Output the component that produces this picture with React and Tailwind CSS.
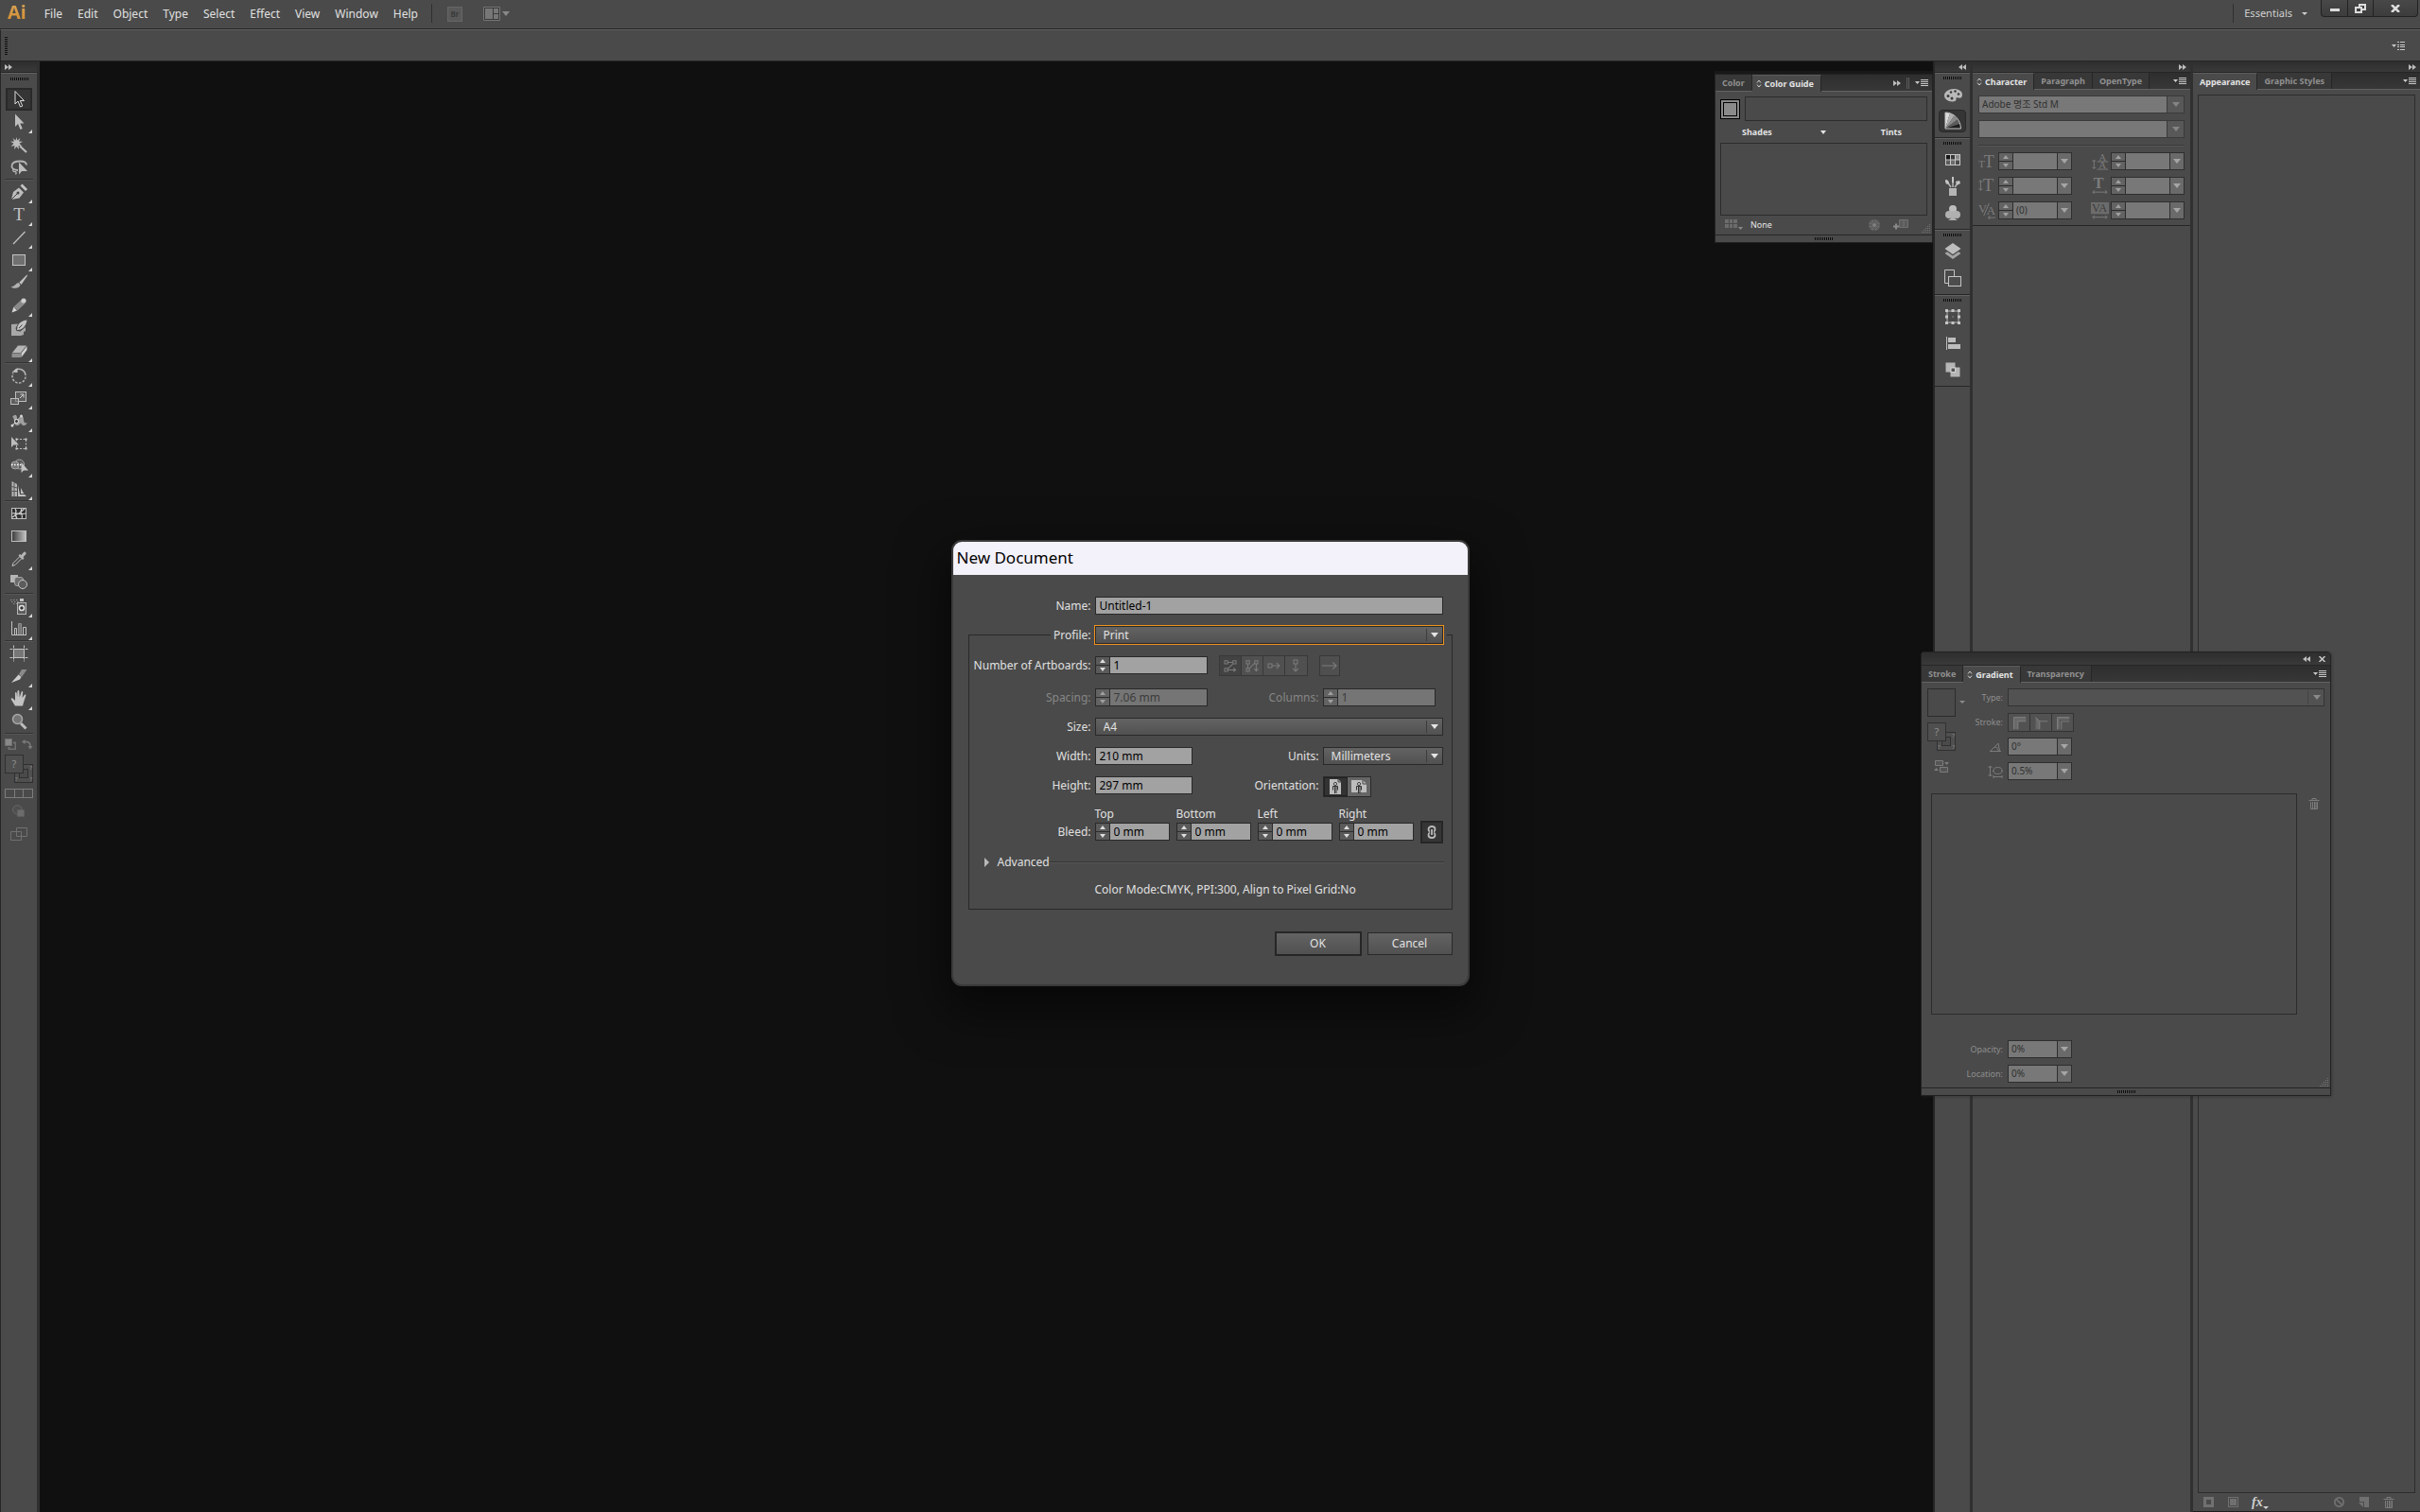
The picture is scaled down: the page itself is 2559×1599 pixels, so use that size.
import React, { useState } from 'react';
import clsx from 'clsx';

const MENUS = ['File', 'Edit', 'Object', 'Type', 'Select', 'Effect', 'View', 'Window', 'Help'];

const ARROW = 'M6 1.500v13.500l3-3 2.500 6 2.300-1-2.500-5.500H15.500z';

/* ---------- Tool icons, all on a 20x20 grid ---------- */

const TOOL_GROUPS = [
  [
    { id: 'Selection', active: true, icon: <path d={ARROW} fill="#2c2c2c" stroke="#dcdcdc" /> },
    { id: 'Direct Selection', more: true, icon: <path d={ARROW} fill="#bdbdbd" /> },
    {
      id: 'Magic Wand',
      icon: (
        <>
          <path d="M7.500 2l.8 3.500L11.500 3 10 6.500l4 .3-3.500 2 3 3-4-.8.5 4-2.500-3-2.500 3 .5-4-4 .8 3-3L1 6.800l4-.3L3.500 3l3 2.500z" fill="#bdbdbd" />
          <path d="M11 11.500L18 18" stroke="#bdbdbd" strokeWidth="2" />
        </>
      ),
    },
    {
      id: 'Lasso',
      icon: (
        <>
          <path d="M9 13C4 13 2 10.500 2.500 8 3 5 7 3.500 11 3.500s7 1.500 7 4" fill="none" stroke="#b5b5b5" strokeWidth="1.800" />
          <path d="M5 11.500c-2 1-1.500 3 .5 3s2 1.500 1 3" fill="none" stroke="#b5b5b5" strokeWidth="1.300" />
          <path d="M10 4.500v13l3-3.500h6z" fill="#bdbdbd" />
        </>
      ),
    },
  ],
  [
    {
      id: 'Pen',
      more: true,
      icon: (
        <>
          <path d="M2 18l2-8 6-4.500 5 5-4.500 6z" fill="#bdbdbd" />
          <path d="M2 18l6.500-6.500" stroke="#444" />
          <circle cx="9" cy="11" r="1.500" fill="#444" />
          <path d="M11.500 3.500l2-2 5.500 5.500-2 2z" fill="#c4c4c4" />
        </>
      ),
    },
    {
      id: 'Type',
      more: true,
      icon: <text x="10" y="16" textAnchor="middle" fontSize="19" fill="#c2c2c2" fontFamily="Liberation Serif, serif">T</text>,
    },
    { id: 'Line Segment', more: true, icon: <path d="M4 17L16.500 4" stroke="#c2c2c2" strokeWidth="1.300" /> },
    { id: 'Rectangle', more: true, icon: <rect x="3.500" y="4.500" width="13" height="11" fill="#707070" stroke="#c2c2c2" /> },
    {
      id: 'Paintbrush',
      icon: (
        <>
          <path d="M18.500 1.500l-8 8 2 2.500 6.500-9.500z" fill="#c2c2c2" />
          <path d="M10 10c-3 0-3 3-8.500 4.500 3 2 8.500 2 10-2z" fill="#b0b0b0" />
        </>
      ),
    },
    {
      id: 'Pencil',
      more: true,
      icon: (
        <>
          <path d="M2.500 17.500l2-6 3.500 4z" fill="#d5d5d5" />
          <path d="M4.500 11.500l8-7.500 4 4-8 7.500z" fill="#8a8a8a" />
          <circle cx="15" cy="5" r="2.600" fill="#cfcfcf" />
        </>
      ),
    },
    {
      id: 'Blob Brush',
      icon: (
        <>
          <path d="M2 6l7-.5L6.500 10l1 3 4 .5L17 9v4l-2 1v3l-3 1H2z" fill="#a8a8a8" />
          <path d="M18.500 1.500c-4 0-9 3-10 7l-.5 3.500 3.500-.5c4-1.500 6-5 7-10z" fill="#c2c2c2" />
          <path d="M10 10l3.500-3.500" stroke="#444" />
        </>
      ),
    },
    {
      id: 'Eraser',
      more: true,
      icon: (
        <>
          <path d="M3 12l6-7.500h9L12 12z" fill="#b5b5b5" />
          <path d="M2.500 12.500H12V17H2.500z" fill="#8f8f8f" />
          <path d="M12.500 12.500L18.500 5v4L12.500 17z" fill="#d2d2d2" />
        </>
      ),
    },
  ],
  [
    {
      id: 'Rotate',
      more: true,
      icon: (
        <>
          <path d="M6 4.500A7 7 0 0 1 17 10" fill="none" stroke="#b5b5b5" strokeWidth="1.500" />
          <path d="M17 11.500A7 7 0 1 1 4 7.500" fill="none" stroke="#b5b5b5" strokeWidth="1.500" strokeDasharray="2.500 1.500" />
          <path d="M2.500 6.500L8.500 2v5z" fill="#c2c2c2" />
        </>
      ),
    },
    {
      id: 'Scale',
      more: true,
      icon: (
        <>
          <rect x="6.500" y="3.500" width="11" height="10" fill="#5c5c5c" stroke="#bdbdbd" />
          <rect x="1.500" y="10.500" width="8" height="6" fill="#6c6c6c" fillOpacity=".6" stroke="#bdbdbd" />
          <path d="M11 10l3.500-3.500M11.500 6H15v3.500" fill="none" stroke="#d2d2d2" />
        </>
      ),
    },
    {
      id: 'Width',
      more: true,
      icon: (
        <>
          <path d="M3 6c3-4 5-2 5 1s3 2 4-1 3 0 3 3 2 4 4 3c-2 4-6 4-7 0-2 4-7 4-7-1 0-3-1-5-2-5z" fill="#a0a0a0" />
          <path d="M3 15l9-9.500" stroke="#e0e0e0" />
          <circle cx="3" cy="15" r="1.500" fill="#d5d5d5" />
          <circle cx="12.500" cy="5" r="1.500" fill="#d5d5d5" />
          <circle cx="7.500" cy="10.500" r="2" fill="#3a3a3a" stroke="#e5e5e5" />
        </>
      ),
    },
    {
      id: 'Free Transform',
      icon: (
        <>
          <rect x="7.500" y="5.500" width="10" height="10" fill="none" stroke="#bdbdbd" strokeDasharray="2 1.500" />
          <path d="M6.500 4.500h2v2h-2zM16.500 4.500h2v2h-2zM16.500 14.500h2v2h-2zM6.500 14.500h2v2h-2z" fill="#cfcfcf" />
          <path d="M2 3v11l2.500-2.500H10z" fill="#bdbdbd" />
        </>
      ),
    },
    {
      id: 'Shape Builder',
      more: true,
      icon: (
        <>
          <circle cx="10.500" cy="8" r="5" fill="#5c5c5c" stroke="#a5a5a5" />
          <circle cx="6" cy="9" r="4" fill="#777" stroke="#a5a5a5" />
          <path d="M2 8.500h11" stroke="#fff" strokeWidth="1.500" strokeDasharray="1.500 1.500" />
          <path d="M12.500 6v11l2.500-2.500h5z" fill="#c2c2c2" />
        </>
      ),
    },
    {
      id: 'Perspective Grid',
      more: true,
      icon: (
        <>
          <path d="M2.500 2l5.500 3v13H2.500z" fill="#b5b5b5" />
          <path d="M2.500 7.500L8 9M2.500 12.500h5.500M5 3.500V18" stroke="#555" />
          <path d="M9 6v12h9l-2-2h-5zM12 9v6h3.500L14 13z" fill="#c2c2c2" />
        </>
      ),
    },
  ],
  [
    {
      id: 'Mesh',
      icon: (
        <>
          <rect x="2.500" y="4.500" width="15" height="11" fill="#2f2f2f" stroke="#bdbdbd" />
          <path d="M3 10c4-1 6 2 14 0M6 5c3 3-2 6 2 10M13 5c-3 4 2 6 0 10M3 14l6-4M10 10l6-5" fill="none" stroke="#cfcfcf" strokeWidth="1.200" />
        </>
      ),
    },
    {
      id: 'Gradient',
      icon: (
        <>
          <defs>
            <linearGradient id="toolGradient">
              <stop stopColor="#3a3a3a" />
              <stop offset="1" stopColor="#c5c5c5" />
            </linearGradient>
          </defs>
          <rect x="2.500" y="4.500" width="15" height="11" fill="url(#toolGradient)" stroke="#bdbdbd" />
        </>
      ),
    },
    {
      id: 'Eyedropper',
      more: true,
      icon: (
        <>
          <path d="M3 17.500l1-3 7-7 2 2-7 7z" fill="#4a4a4a" stroke="#c2c2c2" />
          <path d="M9.500 6.500l1.500-1.500 1.500 1L15 3c1-1 3 0 2.500 2L14.500 8l1 1.500L14 11z" fill="#b5b5b5" />
        </>
      ),
    },
    {
      id: 'Blend',
      icon: (
        <>
          <rect x="1" y="3" width="8" height="8" fill="#b5b5b5" />
          <rect x="5.500" y="5.500" width="9" height="9" rx="2.500" fill="#6c6c6c" stroke="#a5a5a5" />
          <circle cx="14" cy="13" r="4.500" fill="#5c5c5c" stroke="#c5c5c5" />
        </>
      ),
    },
  ],
  [
    {
      id: 'Symbol Sprayer',
      more: true,
      icon: (
        <>
          <path d="M1 3.500h9M2 5.500h8M4 7.500h5" stroke="#8f8f8f" strokeDasharray="1.500 1.500" />
          <path d="M11 2h4v3h-4z" fill="#c2c2c2" />
          <rect x="8.500" y="6.500" width="9" height="12" fill="#5c5c5c" stroke="#b5b5b5" />
          <circle cx="13" cy="12" r="2.500" fill="#333" stroke="#e2e2e2" strokeWidth="1.500" />
        </>
      ),
    },
    {
      id: 'Column Graph',
      more: true,
      icon: (
        <>
          <path d="M2.500 2v14.500H18" fill="none" stroke="#c2c2c2" />
          <path d="M5.500 16V9.500h2V16M14.500 16V8.500h3V16" fill="none" stroke="#c2c2c2" />
          <path d="M9.500 16V4.500h3V16" fill="#777" stroke="#8f8f8f" />
        </>
      ),
    },
  ],
  [
    {
      id: 'Artboard',
      icon: (
        <>
          <rect x="4.500" y="5.500" width="11" height="9" fill="#777" />
          <path d="M4.500 1.500v17M15.500 1.500v17M.5 5.500h19M.5 14.500h19" stroke="#c2c2c2" strokeDasharray="3 1 11 1" />
        </>
      ),
    },
    {
      id: 'Slice',
      more: true,
      icon: (
        <>
          <path d="M18.500 3H13l-3 5 3 3z" fill="#8a8a8a" />
          <path d="M9.500 8.500L2 17l9-3.500 1.500-2.500z" fill="#cfcfcf" />
        </>
      ),
    },
    {
      id: 'Hand',
      more: true,
      icon: (
        <path
          d="M6 17.500L2 11c-1-2 1-2 2-1l2 2V4c0-1.500 1.500-1.500 1.700 0L8 8.500 8.500 2c.2-1.500 1.700-1.500 1.800 0l.4 6.500L12.500 3c.5-1.500 1.800-1 1.700.3L13.500 9l2.300-3c1-1 2-.3 1.500.8l-2.300 7-1 3.700z"
          fill="#c2c2c2"
        />
      ),
    },
    {
      id: 'Zoom',
      icon: (
        <>
          <path d="M12 12l5.500 5.500" stroke="#bdbdbd" strokeWidth="3" />
          <circle cx="8.500" cy="7.500" r="5" fill="#757575" stroke="#a8a8a8" strokeWidth="1.500" />
        </>
      ),
    },
  ],
];

/* ---------- Icons of the collapsed dock ---------- */

const DOCK_GROUPS = [
  [
    {
      id: 'Color',
      icon: (
        <>
          <path d="M1 11c0-4 5-7 10-7s9 2.500 9 6-2 4-4 3.500-3 0-2.500 1.500-1.500 2.500-4 2.500c-5 0-8.500-3-8.500-6.500z" fill="#b9b9b9" />
          <circle cx="5" cy="11.500" r="1.500" fill="#3c3c3c" />
          <circle cx="9" cy="14" r="1.500" fill="#3c3c3c" />
          <circle cx="8" cy="7.500" r="1.300" fill="#3c3c3c" />
          <circle cx="12.500" cy="6.500" r="1.300" fill="#3c3c3c" />
          <circle cx="16" cy="9.500" r="1.300" fill="#3c3c3c" />
        </>
      ),
    },
    {
      id: 'Color Guide',
      active: true,
      icon: (
        <>
          <path d="M2 18V1l5 .8z" fill="#dadada" />
          <path d="M2 18L7 1.800l4.500 2.700z" fill="#b0b0b0" />
          <path d="M2 18l9.500-13.500 3.500 4z" fill="#8a8a8a" />
          <path d="M2 18l13-9.500 2.500 4.500z" fill="#5c5c5c" />
          <path d="M2 18l15.500-5 .5 5z" fill="#1e1e1e" />
          <path d="M2 1c9 0 16 7 16.500 17H2z" fill="none" stroke="#c5c5c5" />
        </>
      ),
    },
  ],
  [
    {
      id: 'Swatches',
      icon: (
        <>
          <rect x="2" y="4" width="16" height="12" fill="#c5c5c5" />
          <path d="M3 5h4v4.500H3z" fill="#151515" />
          <path d="M8 5h4v4.500H8z" fill="#3a3a3a" />
          <path d="M13 5h4v4.500h-4z" fill="#8a8a8a" />
          <path d="M3 10.500h4V15H3z" fill="#5c5c5c" />
          <path d="M8 10.500h4V15H8z" fill="#6c6c6c" />
          <path d="M13 10.500h4V15h-4z" fill="#4a4a4a" />
        </>
      ),
    },
    {
      id: 'Brushes',
      icon: (
        <>
          <path d="M6 12h8v8H6z" fill="#b5b5b5" />
          <path d="M8 11L4 5M10 11V4M12 11l3-4" stroke="#b5b5b5" strokeWidth="1.500" />
          <path d="M2 3c3 0 4 2 4 4l-2 1C2 7 2 5 2 3zM9 0h2v6H9zM13 5l4-1 1 3-4 2z" fill="#c5c5c5" />
        </>
      ),
    },
    {
      id: 'Symbols',
      icon: (
        <>
          <circle cx="10" cy="6" r="4" fill="#bdbdbd" />
          <circle cx="6" cy="12" r="4" fill="#b0b0b0" />
          <circle cx="14" cy="12" r="4" fill="#b0b0b0" />
          <path d="M9 8h2l1 8 3 2H5l3-2z" fill="#b0b0b0" />
        </>
      ),
    },
  ],
  [
    {
      id: 'Layers',
      icon: (
        <>
          <path d="M10 1l8.500 6L10 13 1.500 7z" fill="#bdbdbd" />
          <path d="M1.500 12l2.500-1.800 6 4.300 6-4.300 2.500 1.800L10 18z" fill="#a5a5a5" />
        </>
      ),
    },
    {
      id: 'Artboards',
      icon: (
        <g fill="none" stroke="#c5c5c5">
          <path d="M5 15.500H1.500v-14h10V8" />
          <rect x="5.500" y="8.500" width="13" height="10" fill="#4d4d4d" />
        </g>
      ),
    },
  ],
  [
    {
      id: 'Transform',
      icon: (
        <>
          <rect x="4" y="4" width="12" height="12" fill="none" stroke="#b5b5b5" />
          <path d="M2 2h3v3H2zM8.500 2h3v3h-3zM15 2h3v3h-3zM2 8.500h3v3H2zM15 8.500h3v3h-3zM2 15h3v3H2zM8.500 15h3v3h-3zM15 15h3v3h-3zM9.500 9.500h1v1h-1z" fill="#c5c5c5" />
        </>
      ),
    },
    {
      id: 'Align',
      icon: <path d="M3 3h1v14H3zM5 4h8v5H5zM5 11h13v5H5z" fill="#bdbdbd" />,
    },
    {
      id: 'Pathfinder',
      icon: (
        <>
          <path d="M2.500 2.500h10v10h-10zM7.500 7.500h10v10h-10z" fill="#b5b5b5" />
          <rect x="8" y="8" width="4.500" height="4.500" fill="#555" stroke="#d5d5d5" />
        </>
      ),
    },
  ],
];

/* ---------- Small shared pieces ---------- */

function Icon({ children, className = 'size-5' }) {
  return (
    <svg viewBox="0 0 20 20" className={clsx('shrink-0', className)} aria-hidden="true">
      {children}
    </svg>
  );
}

function Grip() {
  return <div className="mx-auto h-[3px] w-[19px] bg-[repeating-linear-gradient(90deg,#0c0c0c_0_1px,#505050_1px_2px)]" />;
}

function Chevrons({ left, title = 'Expand panels' }) {
  return (
    <button title={title} className="flex">
      <svg viewBox="0 0 8 6" className={clsx('h-[6px] w-[8px] fill-[#bdbdbd]', left && 'rotate-180')}>
        <path d="M0 0l4 3-4 3zM4 0l4 3-4 3z" />
      </svg>
    </button>
  );
}

function PanelMenu() {
  return (
    <button title="Panel menu" className="flex">
      <svg viewBox="0 0 14 9" className="h-[9px] w-[14px]">
        <path d="M0 3h5L2.500 6z" fill="#c9c9c9" />
        <path d="M6 1.500h8M6 3.500h8M6 5.500h8M6 7.500h8" stroke="#c9c9c9" />
      </svg>
    </button>
  );
}

function TriDown({ className = 'fill-[#a5a5a5]' }) {
  return (
    <svg viewBox="0 0 8 5" className={clsx('h-[5px] w-[8px] shrink-0', className)} aria-hidden="true">
      <path d="M0 0h8L4 5z" />
    </svg>
  );
}

function Tabs({ tabs, active, children }) {
  const [current, setCurrent] = useState(active);
  return (
    <div className="flex h-[18px] shrink-0 border-b border-[#626262] bg-linear-to-b from-[#2e2e2e] to-[#373737]">
      {tabs.map(({ name, cycle }) => {
        const on = name === current;
        return (
          <button
            key={name}
            onClick={() => setCurrent(name)}
            className={clsx(
              'flex items-center gap-[3px] border-r border-[#262626] pr-[7px] text-[9px] leading-none font-bold',
              on ? '-mb-px h-[18px] border-t border-t-[#5c5c5c] bg-[#4a4a4a] text-[#e4e4e4]' : 'bg-[#383838] text-[#909090]',
              cycle ? 'pl-1' : 'pl-[7px]'
            )}
          >
            {cycle && (
              <svg viewBox="0 0 6 9" className="h-[9px] w-[6px]" fill="none" stroke="#d0d0d0">
                <path d="M1 3.500L3 1l2 2.500M1 5.500L3 8l2-2.500" />
              </svg>
            )}
            {name}
          </button>
        );
      })}
      <div className="ml-auto flex items-center gap-[6px] pr-1">{children}</div>
    </div>
  );
}

function StepButtons({ disabled }) {
  const arrow = disabled ? 'fill-[#a0a0a0]' : 'fill-[#dedede]';
  const btn = clsx('flex flex-1 items-center justify-center', disabled ? 'bg-[#636363]' : 'bg-[#5a5a5a]');
  return (
    <div className="flex w-[15px] shrink-0 flex-col gap-px border-r border-[#2c2c2c] bg-[#2c2c2c]">
      <button type="button" title="Increase" className={btn} disabled={disabled}>
        <svg viewBox="0 0 6 4" className={clsx('h-[4px] w-[6px]', arrow)}><path d="M0 4h6L3 0z" /></svg>
      </button>
      <button type="button" title="Decrease" className={btn} disabled={disabled}>
        <svg viewBox="0 0 6 4" className={clsx('h-[4px] w-[6px]', arrow)}><path d="M0 0h6L3 4z" /></svg>
      </button>
    </div>
  );
}

/* Number field of the docked panels: optional steppers, value, drop-down arrow */
function ComboField({ id, label, value = '', steps, className }) {
  return (
    <div className={clsx('flex h-[19px] border border-[#2e2e2e] bg-[#787878]', className)}>
      {steps && <StepButtons disabled />}
      <input id={id} aria-label={label} defaultValue={value} disabled className="w-0 min-w-0 flex-1 px-[3px] text-[10px] text-[#303030]" />
      <button title="Presets" disabled className="flex w-[15px] items-center justify-center border-l border-[#2e2e2e] bg-[#6a6a6a]">
        <TriDown />
      </button>
    </div>
  );
}

function Select({ id, label, value, options, focused, className }) {
  return (
    <div className={clsx('relative h-[19px] border border-[#292929] bg-linear-to-b from-[#636363] to-[#515151]', focused && 'outline outline-[#f0921f]', className)}>
      <select id={id} aria-label={label} defaultValue={value} className="block h-full w-full appearance-none pl-2 text-xs leading-[16px] text-[#e2e2e2] outline-none">
        {options.map((o) => <option key={o}>{o}</option>)}
      </select>
      <span className="pointer-events-none absolute inset-y-[2px] right-0 flex w-[17px] items-center justify-center border-l border-[#3c3c3c]">
        <TriDown className="fill-[#e4e4e4]" />
      </span>
    </div>
  );
}

/* The fill swatch lying over the stroke swatch */
function FillStroke() {
  return (
    <div className="relative size-[30px] text-[#8e8e8e]">
      <div className="absolute right-0 bottom-0 size-5 border border-[#303030] bg-[#4f4f4f]">
        <div className="absolute inset-[4px] border border-[#303030] bg-[#4a4a4a]" />
        <span className="absolute top-0 right-0 text-[6px] leading-none">?</span>
        <span className="absolute right-0 bottom-0 text-[6px] leading-none">?</span>
        <span className="absolute bottom-0 left-0 text-[6px] leading-none">?</span>
      </div>
      <div className="absolute top-0 left-0 flex size-5 items-center justify-center border border-[#303030] bg-[#4f4f4f] text-[11px]">?</div>
    </div>
  );
}

function ResizeCorner() {
  return (
    <svg viewBox="0 0 10 10" className="size-[10px]" fill="#777" aria-hidden="true">
      <path d="M8 0h1v1H8zM6 2h1v1H6zM8 2h1v1H8zM4 4h1v1H4zM6 4h1v1H6zM8 4h1v1H8zM2 6h1v1H2zM4 6h1v1H4zM6 6h1v1H6zM8 6h1v1H8zM0 8h1v1H0zM2 8h1v1H2zM4 8h1v1H4zM6 8h1v1H6zM8 8h1v1H8z" />
    </svg>
  );
}

function TrashIcon() {
  return (
    <svg viewBox="0 0 12 13" className="h-[13px] w-[12px]" fill="none" stroke="#7c7c7c" aria-hidden="true">
      <path d="M.5 3.500h11M4 3V1.500h4V3M2.500 5v7.500h7V5M4.500 5v7M6.500 5v7M8 5v7" />
    </svg>
  );
}

/* ---------- Top bars ---------- */

function MenuBar() {
  const win = 'flex h-full items-center justify-center border-r border-[#222]';
  return (
    <header className="flex h-[31px] shrink-0 items-start border-b border-[#262626]">
      <div className="ml-2 bg-linear-to-b from-[#dba75c] to-[#cf8a26] bg-clip-text text-[20px] leading-[26px] font-bold text-transparent">Ai</div>
      <nav className="ml-[11px] flex h-[30px] items-center">
        {MENUS.map((m) => (
          <button key={m} className="px-2 text-xs text-[#e0e0e0]">{m}</button>
        ))}
      </nav>
      <div className="mt-1 ml-[6px] h-5 w-px bg-[#2f2f2f]" />
      <button title="Go to Bridge" disabled className="mt-[7px] ml-4 flex size-[16px] items-center justify-center border border-[#666] bg-[#595959] text-[8px] font-bold text-[#3a3a3a]">
        Br
      </button>
      <button title="Arrange documents" disabled className="mt-[7px] ml-[22px] flex items-center gap-[2px]">
        <svg viewBox="0 0 18 15" className="h-[15px] w-[18px]">
          <path d="M.5.500h17v14H.5z" fill="#3a3a3a" stroke="#757575" />
          <path d="M2 2h8v11H2zM11 2h5v5h-5zM11 8h5v5h-5z" fill="#777" />
        </svg>
        <TriDown className="fill-[#888]" />
      </button>
      <div className="mt-1 ml-auto h-5 w-px bg-[#2f2f2f]" />
      <button className="flex h-[28px] items-center gap-[10px] pr-[14px] pl-[11px] text-[11px] text-[#d0d0d0]">
        Essentials
        <svg viewBox="0 0 6 3" className="h-[3px] w-[6px] fill-[#d0d0d0]"><path d="M0 0h6L3 3z" /></svg>
      </button>
      <div className="mr-[2px] flex h-[18px] rounded-b-sm border border-t-0 border-[#222] bg-linear-to-b from-[#484848] to-[#3c3c3c]">
        <button title="Minimize" className={clsx(win, 'w-[28px]')}>
          <span className="mt-[3px] h-[3px] w-[10px] bg-[#dcdcdc]" />
        </button>
        <button title="Restore" className={clsx(win, 'w-[27px]')}>
          <svg viewBox="0 0 12 10" className="h-[10px] w-[12px]" fill="none" stroke="#dcdcdc" strokeWidth="2">
            <path d="M5 3V1h6v5H8M1 4h6v5H1z" />
          </svg>
        </button>
        <button title="Close" className="flex w-[46px] items-center justify-center">
          <svg viewBox="0 0 10 8" className="h-[8px] w-[10px]" stroke="#dcdcdc" strokeWidth="2.500"><path d="M1 0l8 8M9 0L1 8" /></svg>
        </button>
      </div>
    </header>
  );
}

function ControlBar() {
  return (
    <div className="flex h-[34px] shrink-0 items-center justify-between border-t border-b border-l border-t-[#626262] border-b-[#262626] border-l-[#262626] pr-4 pl-1">
      <div className="h-[20px] w-[3px] bg-[repeating-linear-gradient(0deg,#0c0c0c_0_1px,#505050_1px_2px)]" />
      <button title="Control panel menu">
        <svg viewBox="0 0 14 9" className="h-[9px] w-[14px]">
          <path d="M0 3h5L2.500 6z" fill="#c9c9c9" />
          <path d="M6 .5h2M6 3.500h2M6 5.500h2M6 8.500h2M9 .5h5M9 3.500h5M9 5.500h5M9 8.500h5" stroke="#c9c9c9" />
        </svg>
      </button>
    </div>
  );
}

/* ---------- Tool box ---------- */

function ToolBox() {
  return (
    <aside className="flex w-[42px] shrink-0 flex-col border-r-3 border-l border-r-[#303030] border-l-[#262626]">
      <div className="flex h-3 items-center border-b border-[#262626] bg-linear-to-b from-[#2e2e2e] to-[#393939] pl-1">
        <Chevrons />
      </div>
      <div className="w-[38px] border-t border-[#626262] pt-1"><Grip /></div>
      <div className="mt-2 ml-1 flex w-[30px] flex-col">
        {TOOL_GROUPS.map((group, i) => (
          <div key={i} className="flex flex-col items-center border-b border-[#333] shadow-[0_1px_0_#565656] not-first:pt-px">
            {group.map((tool) => (
              <button
                key={tool.id}
                title={`${tool.id} Tool`}
                className={clsx('relative flex h-6 w-[28px] items-center justify-center', tool.active && 'border-2 border-[#292929] bg-[#353535]')}
              >
                <Icon>{tool.icon}</Icon>
                {tool.more && (
                  <svg viewBox="0 0 4 4" className="absolute right-0 bottom-0 size-1 fill-[#d8d8d8]"><path d="M4 0v4H0z" /></svg>
                )}
              </button>
            ))}
          </div>
        ))}
        <div className="mt-[4px] flex h-[14px] items-center justify-between">
          <button title="Default fill and stroke">
            <svg viewBox="0 0 12 12" className="size-3" fill="none" stroke="#707070"><path d="M.5.500h7v7h-7z" fill="#888" /><path d="M9 4.500h2.500v7h-7V9" strokeWidth="2" /></svg>
          </button>
          <button title="Swap fill and stroke">
            <svg viewBox="0 0 12 12" className="size-3" fill="none" stroke="#7a7a7a" strokeWidth="1.500"><path d="M2 3.500h3c3 0 4 2 4 5" /><path d="M0 3.500L3.500 1v5zM6.500 8h5L9 11.500z" fill="#7a7a7a" stroke="none" /></svg>
          </button>
        </div>
        <div className="mt-1"><FillStroke /></div>
        <div className="mt-[6px] grid h-[10px] grid-cols-3 gap-px border border-[#7c7c7c] bg-[#7c7c7c]">
          <button title="Color" className="bg-[#4a4a4a]" />
          <button title="Gradient" className="bg-[#4a4a4a]" />
          <button title="None" className="bg-[#4a4a4a]" />
        </div>
        <button title="Drawing mode" className="mt-[6px] self-center">
          <Icon className="size-4"><circle cx="8" cy="8" r="6" fill="#4f4f4f" stroke="#6c6c6c" /><rect x="8" y="8" width="9" height="9" fill="#6c6c6c" /></Icon>
        </button>
        <button title="Screen mode" className="mt-[6px] self-center">
          <Icon><path d="M7.500 3.500h11v9h-11zM1.500 7.500h11v9h-11z" fill="#4a4a4a" stroke="#707070" /></Icon>
        </button>
      </div>
    </aside>
  );
}

/* ---------- Right docks ---------- */

function DockHeader({ left }) {
  return (
    <div className="flex h-3 shrink-0 items-center justify-end border-b border-[#262626] bg-linear-to-b from-[#2e2e2e] to-[#393939] pr-1">
      <Chevrons left={left} />
    </div>
  );
}

function IconDock() {
  return (
    <aside className="flex w-[42px] shrink-0 flex-col border-r-3 border-l-2 border-r-[#303030] border-l-[#262626]">
      <DockHeader left />
      {DOCK_GROUPS.map((group, i) => (
        <div key={i} className="flex flex-col items-center gap-1 border-t border-b border-t-[#626262] border-b-[#262626] pt-[3px] pb-[5px]">
          <Grip />
          {group.map((p) => (
            <button
              key={p.id}
              title={p.id}
              className={clsx('flex h-6 w-[29px] items-center justify-center', p.active && 'rounded-sm border border-[#292929] bg-[#353535]')}
            >
              <Icon>{p.icon}</Icon>
            </button>
          ))}
        </div>
      ))}
    </aside>
  );
}

const serif = { fontFamily: 'Liberation Serif, serif', fill: '#7c7c7c' };

const CHARACTER_FIELDS = [
  { label: 'Font size', glyph: <><text x="0" y="17" fontSize="12" {...serif}>T</text><text x="6" y="17" fontSize="19" {...serif}>T</text></> },
  { label: 'Leading', glyph: <><text x="9" y="9" fontSize="11" {...serif}>A</text><text x="9" y="18" fontSize="11" {...serif}>A</text><path d="M7 10.500h12M7 19h12M3.500 9v9M1.500 10.500l2-2 2 2M1.500 16.500l2 2 2-2" fill="none" stroke="#7c7c7c" /></> },
  { label: 'Vertical scale', glyph: <><text x="5" y="16" fontSize="20" {...serif}>T</text><path d="M2.500 4v11M.5 6l2-2 2 2M.5 13l2 2 2-2" fill="none" stroke="#7c7c7c" /></> },
  { label: 'Horizontal scale', glyph: <><text x="3" y="13" fontSize="17" fontWeight="bold" {...serif}>T</text><path d="M2 17h16M4 15l-2 2 2 2M16 15l2 2-2 2" fill="none" stroke="#7c7c7c" /></> },
  { label: 'Kerning', value: '(0)', glyph: <><text x="0" y="13" fontSize="13" {...serif}>V</text><text x="9" y="15" fontSize="14" {...serif}>A</text><path d="M6 16l6-14M11 18h8M13 16l-2 2 2 2" fill="none" stroke="#7c7c7c" /></> },
  { label: 'Tracking', glyph: <><path d="M0 1h20v13H0z" fill="#6c6c6c" /><text x="1" y="12" fontSize="13" fontFamily="Liberation Serif, serif" fill="#3c3c3c">VA</text><path d="M2 17.500h16M4 15.500l-2 2 2 2M16 15.500l2 2-2 2" fill="none" stroke="#7c7c7c" /></> },
];

function FontSelect({ label, value }) {
  return (
    <div className="flex h-[19px] border border-[#3a3a3a] bg-[#787878]">
      <input aria-label={label} defaultValue={value} disabled className="min-w-0 flex-1 px-[3px] text-[10px] text-[#303030]" />
      <button title={`Choose ${label.toLowerCase()}`} disabled className="flex w-[18px] items-center justify-center border-l border-[#3a3a3a] bg-[#585858]">
        <TriDown className="fill-[#858585]" />
      </button>
    </div>
  );
}

function CharacterDock() {
  return (
    <aside className="flex w-[233px] shrink-0 flex-col border-r-3 border-[#303030]">
      <DockHeader />
      <section className="border-b border-[#262626]">
        <Tabs tabs={[{ name: 'Character', cycle: true }, { name: 'Paragraph' }, { name: 'OpenType' }]} active="Character">
          <PanelMenu />
        </Tabs>
        <div className="flex flex-col gap-[7px] px-[6px] pt-[6px] pb-[6px]">
          <FontSelect label="Font family" value="Adobe 명조 Std M" />
          <FontSelect label="Font style" value="" />
          <div className="h-px bg-[#3a3a3a] shadow-[0_1px_0_#565656]" />
          <div className="grid grid-cols-2 gap-x-5 gap-y-[7px]">
            {CHARACTER_FIELDS.map((f) => (
              <div key={f.label} className="flex items-center gap-[2px]">
                <Icon className="size-[19px]">{f.glyph}</Icon>
                <ComboField label={f.label} value={f.value} steps className="flex-1" />
              </div>
            ))}
          </div>
        </div>
      </section>
    </aside>
  );
}

function AppearanceDock() {
  return (
    <aside className="flex w-[240px] shrink-0 flex-col">
      <DockHeader />
      <Tabs tabs={[{ name: 'Appearance' }, { name: 'Graphic Styles' }]} active="Appearance">
        <PanelMenu />
      </Tabs>
      <div className="mx-[5px] mt-[5px] flex-1 border border-[#2c2c2c]" />
      <div className="flex h-[20px] items-center border-b border-[#1c1c1c] px-[11px]">
        <button title="Add new stroke" disabled><span className="block size-[11px] border-3 border-[#707070]" /></button>
        <button title="Add new fill" disabled className="ml-[15px]"><span className="block size-[11px] border border-[#707070] p-px"><span className="block size-full bg-[#707070]" /></span></button>
        <button title="Add new effect" className="ml-[14px] flex items-end font-['Liberation_Serif',serif] text-[14px] leading-none font-bold text-[#cfcfcf] italic">
          fx
          <svg viewBox="0 0 6 3" className="h-[3px] w-[6px] fill-[#cfcfcf]"><path d="M0 0h6L3 3z" /></svg>
        </button>
        <button title="Clear appearance" disabled className="ml-auto">
          <svg viewBox="0 0 12 12" className="size-[11px]" fill="none" stroke="#707070" strokeWidth="2"><circle cx="6" cy="6" r="5" /><path d="M2.500 2.500l7 7" /></svg>
        </button>
        <button title="Duplicate item" disabled className="ml-[15px]">
          <svg viewBox="0 0 11 11" className="size-[11px] fill-[#707070]"><path d="M1 0h10v11H6V5H1zM0 6h5v5z" /></svg>
        </button>
        <button title="Delete item" disabled className="mr-[16px] ml-[15px]"><TrashIcon /></button>
      </div>
    </aside>
  );
}

/* ---------- Floating panels ---------- */

function ColorGuidePanel() {
  return (
    <section className="absolute top-[78px] right-[515px] w-[231px] border border-[#222] bg-[#4a4a4a] shadow-[0_-3px_0_#181818]">
      <Tabs tabs={[{ name: 'Color' }, { name: 'Color Guide', cycle: true }]} active="Color Guide">
        <Chevrons title="Collapse to icons" />
        <span className="h-3 w-[3px] border-r border-l border-[#5c5c5c]" />
        <PanelMenu />
      </Tabs>
      <div className="px-[5px] pt-[5px]">
        <div className="flex items-center gap-[5px]">
          <button title="Base color" className="size-[21px] border border-black bg-[#8a8a8a] p-[2px]">
            <span className="block size-full border border-black" />
          </button>
          <div className="h-[26px] flex-1 border border-[#2c2c2c]" />
        </div>
        <div className="flex h-[23px] items-center pr-[27px] pl-[23px] text-[9px] font-bold text-[#e4e4e4]">
          <span>Shades</span>
          <svg viewBox="0 0 6 4" className="ml-[51px] h-[4px] w-[6px] fill-[#e4e4e4]"><path d="M0 0h6L3 4z" /></svg>
          <span className="ml-auto">Tints</span>
        </div>
        <div className="h-[77px] border border-[#2c2c2c]" />
        <div className="flex h-[19px] items-center pl-[5px] text-[9px] text-[#e4e4e4]">
          <button title="Limit colors" disabled>
            <svg viewBox="0 0 19 11" className="h-[11px] w-[19px]">
              <path d="M0 0h13v9H0z" fill="#6c6c6c" />
              <path d="M4.500 0v9M8.500 0v9M0 4.500h13" stroke="#4a4a4a" />
              <path d="M14 8h5l-2.500 3z" fill="#8a8a8a" />
            </svg>
          </button>
          <span className="ml-2">None</span>
          <button title="Edit colors" disabled className="ml-auto">
            <svg viewBox="0 0 12 12" className="size-3"><circle cx="6" cy="6" r="6" fill="#686868" /><path d="M6 0v12M0 6h12M2 2l8 8M10 2l-8 8" stroke="#525252" /><circle cx="6" cy="6" r="2" fill="#808080" /></svg>
          </button>
          <button title="Save to swatches" disabled className="ml-[14px]">
            <svg viewBox="0 0 16 11" className="h-[11px] w-[16px]"><path d="M6.500.500h9v8h-9zM11 1v7" fill="#5c5c5c" stroke="#707070" /><path d="M0 7.500h6M3 4.500v6" stroke="#8a8a8a" strokeWidth="2" /></svg>
          </button>
          <span className="-mr-1 ml-[14px] self-end"><ResizeCorner /></span>
        </div>
      </div>
      <div className="mt-px border-t border-[#262626] pt-[2px] pb-[2px]"><Grip /></div>
    </section>
  );
}

const STROKE_MODES = [
  { id: 'Apply gradient within stroke', fill: 'M3 3h15v5H8v10H3z', line: 'M3 18V3h15M8 18V8h10' },
  { id: 'Apply gradient along stroke', fill: 'M3 3l5 5v10H3z', line: 'M8 18V8h10M3 3l5 5' },
  { id: 'Apply gradient across stroke', fill: 'M3 3h15v3H6v12H3z', line: 'M3 18V3h15M8 18V8h10' },
];

function GradientPanel() {
  const row = 'grid h-[19px] grid-cols-[47px_1fr] items-center gap-x-[5px]';
  const label = 'justify-self-end text-[9px] text-[#8e8e8e]';
  return (
    <section className="absolute top-[689px] right-[94px] w-[434px] rounded-t border border-[#222] bg-[#4a4a4a] shadow-[1px_1px_3px_#2226]">
      <div className="flex h-[14px] items-center justify-end gap-[9px] border-b border-[#262626] bg-linear-to-b from-[#2e2e2e] to-[#393939] pr-[5px]">
        <Chevrons left title="Collapse to icons" />
        <button title="Close panel">
          <svg viewBox="0 0 7 6" className="h-[6px] w-[7px]" stroke="#c9c9c9" strokeWidth="1.500"><path d="M.5 0l6 6M6.500 0l-6 6" /></svg>
        </button>
      </div>
      <Tabs tabs={[{ name: 'Stroke' }, { name: 'Gradient', cycle: true }, { name: 'Transparency' }]} active="Gradient">
        <PanelMenu />
      </Tabs>
      <div className="flex px-[6px] pt-[6px]">
        <div className="flex w-[30px] flex-col">
          <div className="h-[30px] border border-[#2c2c2c]" />
          <div className="mt-[6px]"><FillStroke /></div>
          <button title="Reverse gradient" disabled className="mt-[10px] self-center">
            <svg viewBox="0 0 16 14" className="h-[14px] w-[16px]">
              <path d="M1.500.500h8v5h-8zM6.500 7.500h8v5h-8z" fill="#555" stroke="#7c7c7c" />
              <path d="M11 2h5l-2.500 3zM0 11h5L2.500 8z" fill="#7c7c7c" />
            </svg>
          </button>
        </div>
        <svg viewBox="0 0 6 3" className="mt-[13px] ml-1 h-[3px] w-[6px] fill-[#8a8a8a]"><path d="M0 0h6L3 3z" /></svg>
        <div className="-ml-[7px] flex flex-1 flex-col gap-[7px]">
          <div className={row}>
            <label htmlFor="gradient-type" className={label}>Type:</label>
            <div className="relative flex">
              <select id="gradient-type" disabled className="h-[19px] w-full appearance-none border border-[#333] bg-[#525252] opacity-100" />
              <span className="pointer-events-none absolute inset-y-[2px] right-0 flex w-[18px] items-center justify-center border-l border-[#434343]"><TriDown className="fill-[#8a8a8a]" /></span>
            </div>
          </div>
          <div className={row}>
            <span className={label}>Stroke:</span>
            <div className="flex h-[20px] w-[70px] divide-x divide-[#333] border border-[#333]">
              {STROKE_MODES.map((m) => (
                <button key={m.id} title={m.id} disabled className="flex flex-1 items-center justify-center bg-[#525252]">
                  <Icon className="size-[17px]">
                    <path d={m.fill} fill="#696969" />
                    <path d={m.line} fill="none" stroke="#858585" />
                  </Icon>
                </button>
              ))}
            </div>
          </div>
          <div className={row}>
            <label htmlFor="gradient-angle" aria-label="Angle" className="justify-self-end pr-[2px]">
              <svg viewBox="0 0 12 10" className="h-[10px] w-[12px]" fill="none" stroke="#7c7c7c"><path d="M0 9.500h12M1 9L9 1M5 5c3 0 4 2 4 4M9 1l1.500 8" /></svg>
            </label>
            <ComboField id="gradient-angle" value="0°" className="w-[68px]" />
          </div>
          <div className={row}>
            <label htmlFor="gradient-ratio" aria-label="Aspect ratio" className="justify-self-end">
              <svg viewBox="0 0 16 14" className="h-[14px] w-[16px]" fill="none" stroke="#7c7c7c"><path d="M2.500 1v11M.5 3l2-2 2 2M.5 10l2 2 2-2M6 12.500h9M6 11v3M15 11v3M5 6.500h1M15 6.500h1" /><ellipse cx="10.500" cy="6" rx="4.500" ry="3.500" /></svg>
            </label>
            <ComboField id="gradient-ratio" value="0.5%" className="w-[68px]" />
          </div>
        </div>
      </div>
      <div className="mt-[14px] flex gap-3 px-[10px]">
        <div className="h-[234px] w-[387px] border border-[#2c2c2c]" />
        <button title="Delete stop" disabled className="mt-1 self-start"><TrashIcon /></button>
      </div>
      <div className="mt-[27px] flex flex-col gap-[7px] pl-[39px]">
        <div className={row}>
          <label htmlFor="gradient-opacity" className={label}>Opacity:</label>
          <ComboField id="gradient-opacity" value="0%" className="w-[68px]" />
        </div>
        <div className={row}>
          <label htmlFor="gradient-location" className={label}>Location:</label>
          <ComboField id="gradient-location" value="0%" className="w-[68px]" />
        </div>
      </div>
      <div className="-mt-[5px] flex justify-end pr-px"><ResizeCorner /></div>
      <div className="border-t border-[#262626] pt-[2px] pb-[2px]"><Grip /></div>
    </section>
  );
}

/* ---------- New Document dialog ---------- */

const LABEL = 'w-[129px] shrink-0 text-right text-xs leading-[19px]';
const ON = 'text-[#e0e0e0]';
const OFF = 'text-[#868686]';

function StepField({ id, label, value, disabled, className }) {
  return (
    <div className={clsx('flex h-[19px] border border-[#292929]', disabled ? 'bg-[#757575]' : 'bg-[#a2a2a2]', className)}>
      <StepButtons disabled={disabled} />
      <input id={id} aria-label={label} defaultValue={value} disabled={disabled} className={clsx('w-0 min-w-0 flex-1 px-1 text-xs leading-[17px]', disabled ? 'text-[#3c3c3c]' : 'text-black')} />
    </div>
  );
}

const GRID_MODES = [
  { id: 'Grid by Row', on: true, d: 'M2.500 3.500h4v4h-4zM13.500 3.500h4v4h-4zM2.500 13.500h4v4h-4zM7 5.500h6M13 8l-6 6M7 15.500h10M14 13l3 2.500-3 2.500' },
  { id: 'Grid by Column', d: 'M2.500 3.500h4v4h-4zM13.500 3.500h4v4h-4zM2.500 13.500h4v4h-4zM4.500 8v5M7 13l6-6M15.500 8v9M13 14l2.500 3 2.500-3' },
  { id: 'Arrange by Row', d: 'M2.500 7.500h5v5h-5zM8 10h9M13.500 6l4 4-4 4' },
  { id: 'Arrange by Column', d: 'M7.500 2.500h5v5h-5zM10 8v9M6.500 13.500l3.500 4 3.500-4' },
];

function NewDocumentDialog() {
  const [bleedLinked, setBleedLinked] = useState(true);
  const [orientation, setOrientation] = useState('portrait');
  const modeBtn = 'flex h-full items-center justify-center';

  return (
    <div className="pointer-events-none absolute inset-0 flex items-center justify-center pt-[15px]">
      <form
        role="dialog"
        aria-label="New Document"
        onSubmit={(e) => e.preventDefault()}
        className="pointer-events-auto w-[548px] overflow-hidden rounded-[11px] border-2 border-[#3a3a3a] bg-[#4a4a4a] pb-[30px] shadow-[0_20px_50px_8px_rgba(0,0,0,0.5)]"
      >
        <h1 className="h-[35px] bg-[#f3f1f9] pl-1 text-[17px] leading-[34px] text-black">New Document</h1>

        <div className="mt-[23px] flex gap-1 pr-[26px] pl-[17px]">
          <label htmlFor="doc-name" className={clsx(LABEL, ON)}>Name:</label>
          <input id="doc-name" defaultValue="Untitled-1" className="h-[19px] min-w-0 flex-1 border border-[#292929] bg-[#a2a2a2] px-1 text-xs text-black" />
        </div>

        <fieldset className="mx-4 mt-[12px] border border-[#292929] pb-[10px]">
          <legend className="ml-[86px] flex w-[419px] gap-1 pr-1">
            <label htmlFor="doc-profile" className="w-[43px] text-right text-xs leading-[19px] text-[#e0e0e0]">Profile:</label>
            <Select id="doc-profile" value="Print" options={['Print', 'Web', 'Devices', 'Video and Film', 'Basic RGB']} focused className="flex-1" />
          </legend>

          <div className="flex flex-col gap-3 pr-[9px]">
            <div className="mt-[13px] mb-[2px] flex gap-1">
              <label htmlFor="doc-artboards" className={clsx(LABEL, ON)}>Number of Artboards:</label>
              <StepField id="doc-artboards" value="1" className="w-[119px]" />
              <div className="-my-px ml-2 flex h-[22px] w-[94px] divide-x divide-[#383838] border border-[#383838]">
                {GRID_MODES.map((m) => (
                  <button key={m.id} type="button" title={m.id} disabled className={clsx(modeBtn, 'flex-1', m.on ? 'bg-[#434343]' : 'bg-[#505050]')}>
                    <Icon className="size-4"><path d={m.d} fill="none" stroke="#7c7c7c" strokeWidth="1.300" /></Icon>
                  </button>
                ))}
              </div>
              <button type="button" title="Change to Right-to-Left Layout" disabled className="-my-px ml-2 flex h-[22px] w-[22px] items-center justify-center border border-[#383838] bg-[#4f4f4f]">
                <Icon className="size-4"><path d="M0 10h19M14 5.500l5 4.500-5 4.500" fill="none" stroke="#7c7c7c" strokeWidth="1.500" /></Icon>
              </button>
            </div>

            <div className="flex gap-1">
              <label htmlFor="doc-spacing" className={clsx(LABEL, OFF)}>Spacing:</label>
              <StepField id="doc-spacing" value="7.06 mm" disabled className="w-[119px]" />
              <label htmlFor="doc-columns" className={clsx('ml-auto text-xs leading-[19px]', OFF)}>Columns:</label>
              <StepField id="doc-columns" value="1" disabled className="mr-2 w-[119px]" />
            </div>

            <div className="flex gap-1">
              <label htmlFor="doc-size" className={clsx(LABEL, ON)}>Size:</label>
              <Select id="doc-size" value="A4" options={['A4', 'A3', 'A5', 'B5', 'B4', 'Letter', 'Legal', 'Tabloid']} className="flex-1" />
            </div>

            <div className="flex gap-1">
              <label htmlFor="doc-width" className={clsx(LABEL, ON)}>Width:</label>
              <input id="doc-width" defaultValue="210 mm" className="h-[19px] w-[103px] border border-[#292929] bg-[#a2a2a2] px-1 text-xs text-black" />
              <label htmlFor="doc-units" className="ml-auto text-xs leading-[19px] text-[#e0e0e0]">Units:</label>
              <Select id="doc-units" value="Millimeters" options={['Points', 'Picas', 'Inches', 'Millimeters', 'Centimeters', 'Pixels']} className="w-[127px]" />
            </div>

            <div className="flex h-[19px] gap-1">
              <label htmlFor="doc-height" className={clsx(LABEL, ON)}>Height:</label>
              <input id="doc-height" defaultValue="297 mm" className="h-[19px] w-[103px] border border-[#292929] bg-[#a2a2a2] px-1 text-xs text-black" />
              <span className="ml-auto text-xs leading-[19px] text-[#e0e0e0]">Orientation:</span>
              <div className="mr-[76px] flex h-[22px] w-[51px] border border-[#292929]">
                {['portrait', 'landscape'].map((o) => (
                  <button
                    key={o}
                    type="button"
                    title={o}
                    aria-pressed={orientation === o}
                    onClick={() => setOrientation(o)}
                    className={clsx(modeBtn, 'flex-1', orientation === o ? 'border border-[#222] bg-[#333]' : 'bg-[#666]')}
                  >
                    <svg viewBox="0 0 16 18" className="h-[18px] w-[16px]">
                      <path d={o === 'portrait' ? 'M2 1h9l3 3v13H2z' : 'M0 2h12l4 4v9H0z'} fill="#bdbdbd" />
                      <path d={o === 'portrait' ? 'M11 1v3h3' : 'M12 2v4h4'} fill="none" stroke="#444" />
                      <circle cx="8" cy="6" r="1.500" fill="#eee" stroke="#333" />
                      <path d="M5.500 8.500h5v4M5.500 8.500v4M7.500 9v7M9 9v7" fill="none" stroke="#333" />
                    </svg>
                  </button>
                ))}
              </div>
            </div>

            <div className="flex items-end gap-1">
              <span className={clsx(LABEL, ON)}>Bleed:</span>
              <div className="flex gap-[7px]">
                {['Top', 'Bottom', 'Left', 'Right'].map((side) => (
                  <div key={side} className="w-[79px]">
                    <label htmlFor={`bleed-${side}`} className="block text-xs leading-[18px] text-[#e0e0e0]">{side}</label>
                    <StepField id={`bleed-${side}`} value="0 mm" />
                  </div>
                ))}
              </div>
              <button
                type="button"
                title="Make all settings the same"
                aria-pressed={bleedLinked}
                onClick={() => setBleedLinked(!bleedLinked)}
                className="-mb-[3px] ml-auto flex size-6 items-center justify-center border-2 border-[#262626] bg-[#353535]"
              >
                <svg viewBox="0 0 10 14" className="h-[14px] w-[10px]" fill="none" stroke="#b9b9b9" strokeWidth="1.800">
                  <path d="M3 6.500C1.500 6 1.500 5 1.500 4c0-4 7-4 7 0 0 1 0 2-1.500 2.500M3 7.500c-1.500.5-1.500 1.500-1.500 2.500 0 4 7 4 7 0 0-1 0-2-1.500-2.500M5 4v6" />
                </svg>
              </button>
            </div>
          </div>

          <div className="mt-[13px] flex items-center pr-[8px] pl-4">
            <button type="button" className="flex items-center gap-[9px] text-xs leading-[20px] text-[#e0e0e0]">
              <svg viewBox="0 0 5 10" className="h-[10px] w-[5px] fill-[#b9b9b9]"><path d="M0 0l5 5-5 5z" /></svg>
              Advanced
            </button>
            <div className="flex-1 border-t border-b border-t-[#363636] border-b-[#555]" />
          </div>
          <p className="mt-[9px] pl-[133px] text-xs leading-[20px] text-[#e0e0e0]">Color Mode:CMYK, PPI:300, Align to Pixel Grid:No</p>
        </fieldset>

        <div className="mt-[23px] flex items-center justify-end gap-[6px] pr-4">
          <button type="submit" className="h-[26px] w-[92px] border-2 border-[#262626] bg-linear-to-b from-[#636363] to-[#515151] text-xs text-[#e2e2e2]">OK</button>
          <button type="button" className="h-[24px] w-[90px] border border-[#292929] bg-linear-to-b from-[#636363] to-[#515151] text-xs text-[#e2e2e2]">Cancel</button>
        </div>
      </form>
    </div>
  );
}

export default function App() {
  return (
    <div className="relative flex h-screen flex-col overflow-hidden bg-[#4a4a4a] font-['Noto_Sans','Noto_Sans_CJK_KR',sans-serif] text-[#e0e0e0]">
      <MenuBar />
      <ControlBar />
      <div className="flex min-h-0 flex-1">
        <ToolBox />
        <main className="min-w-0 flex-1 bg-[#101010]" />
        <IconDock />
        <CharacterDock />
        <AppearanceDock />
      </div>
      <ColorGuidePanel />
      <GradientPanel />
      <NewDocumentDialog />
    </div>
  );
}
